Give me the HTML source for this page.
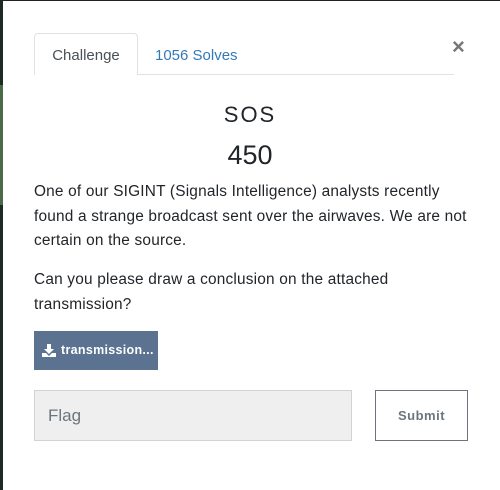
<!DOCTYPE html>
<html><head><style>
*{margin:0;padding:0;box-sizing:border-box}
body{width:500px;height:490px;background:#fff;position:relative;overflow:hidden;font-family:"Liberation Sans",sans-serif;color:#212529}
.ls{position:absolute;left:0;top:0;width:3px;height:490px;background:#1e2a24}
.ls2{position:absolute;left:0;top:85px;width:3px;height:120px;background:#4a6a4a}
.tb{position:absolute;left:0;top:0;width:500px;height:1px;background:#222}
.tab{position:absolute;left:34px;top:33px;width:104px;height:42px;border:1px solid #dee2e6;border-bottom:none;border-radius:4px 4px 0 0;background:#fff;font-size:15px;text-align:center;line-height:44px;color:#495057}
.line{position:absolute;left:34px;top:74px;width:420px;height:1px;background:#dee2e6}
.t2{position:absolute;left:155px;top:47px;font-size:15px;color:#337ab7}
.x{position:absolute;left:452px;top:34px;font-size:22px;color:#777;font-weight:bold}
.h{position:absolute;left:0;width:500px;text-align:center}
p{position:absolute;left:34px;width:460px;font-size:15.4px;line-height:24.5px;letter-spacing:0.2px;white-space:nowrap}
.dl{position:absolute;left:34px;top:331px;width:124px;height:39px;background:#5b7290;color:#fff;font-size:12.5px;font-weight:bold;line-height:39px;padding-left:27px;letter-spacing:0.3px}
.inp{position:absolute;left:34px;top:390px;width:318px;height:51px;background:#efefef;border:1px solid #cfd4d9;font-size:17px;color:#6c757d;padding-left:13px;line-height:49px}
.sb{position:absolute;left:375px;top:390px;width:93px;height:51px;border:1px solid #6c757d;text-align:center;line-height:49px;font-size:13px;font-weight:bold;color:#6c757d;letter-spacing:0.5px}
</style></head><body>
<div class="ls"></div><div class="ls2"></div><div class="tb"></div>
<div class="line"></div>
<div class="tab">Challenge</div>
<div class="t2">1056 Solves</div>
<div class="x">×</div>
<div class="h" style="top:102px;font-size:22px;letter-spacing:2px">SOS</div>
<div class="h" style="top:140px;font-size:27px">450</div>
<p style="top:180px">One of our SIGINT (Signals Intelligence) analysts recently<br>found a strange broadcast sent over the airwaves. We are not<br>certain on the source.</p>
<p style="top:268px">Can you please draw a conclusion on the attached<br>transmission?</p>
<div class="dl"><svg style="position:absolute;left:8px;top:13px" width="14" height="13" viewBox="0 0 14 13"><path d="M5 0h4v5h3l-5 5-5-5h3z" fill="#fff"/><path d="M0 9h4l3 3 3-3h4v4H0z" fill="#fff"/></svg>transmission...</div>
<div class="inp">Flag</div>
<div class="sb">Submit</div>
</body></html>
